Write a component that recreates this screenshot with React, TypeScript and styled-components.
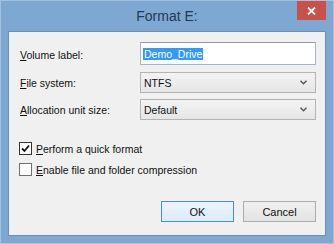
import React from "react";
import styled, { createGlobalStyle } from "styled-components";

const GlobalStyle = createGlobalStyle`
  html, body {
    margin: 0;
    padding: 0;
    background: #7fa8d1;
  }
  body {
    font-family: "Liberation Sans", Arial, sans-serif;
  }
`;

const Window = styled.div`
  box-sizing: border-box;
  width: 334px;
  height: 244px;
  display: flex;
  flex-direction: column;
  background: #7ea7d1;
  border: 1px solid #a4c1e0;
`;

const TitleBar = styled.div`
  height: 30px;
  display: grid;
  grid-template-columns: 1fr auto 1fr;
  align-items: start;
`;

const Title = styled.div`
  grid-column: 2;
  align-self: center;
  font-size: 14px;
  color: #233a55;
`;

const CloseButton = styled.div`
  grid-column: 3;
  justify-self: end;
  width: 29px;
  height: 19px;
  margin-right: 7px;
  background: #c9504b;
  display: flex;
  align-items: center;
  justify-content: center;
`;

const Content = styled.div`
  flex: 1;
  margin: 0 7px 7px 7px;
  background: #f0f0f0;
  border: 1px solid #6b90b8;
  display: flex;
  flex-direction: column;
  padding: 10px 9px 13px 11px;
  font-size: 10.5px;
  color: #111;
`;

const FormGrid = styled.div`
  display: grid;
  grid-template-columns: 120px 176px;
  grid-template-rows: 24px 21px 21px;
  row-gap: 6px;
  align-items: center;
`;

const Label = styled.div`
  padding-top: 1px;
`;

const U = styled.span`
  text-decoration: underline;
`;

const TextBox = styled.div`
  box-sizing: border-box;
  height: 23px;
  align-self: start;
  background: #fff;
  border: 1px solid #a9b6c8;
  border-top-color: #8a9bb4;
  display: flex;
  align-items: center;
  padding-left: 2px;
`;

const Selected = styled.span`
  background: #3399ff;
  color: #fff;
  padding: 0 1px;
  line-height: 12px;
`;

const Select = styled.div`
  box-sizing: border-box;
  height: 21px;
  border: 1px solid #b3b3b3;
  background: linear-gradient(#f3f3f3, #e6e6e6);
  display: flex;
  align-items: center;
  justify-content: space-between;
  padding: 0 8px 0 3px;
`;

const Checks = styled.div`
  margin-top: 18px;
  display: flex;
  flex-direction: column;
`;

const CheckRow = styled.div`
  height: 21px;
  display: flex;
  align-items: center;
  gap: 4px;
  margin-left: -1px;
`;

const Box = styled.div<{ $checked?: boolean }>`
  box-sizing: border-box;
  width: 13px;
  height: 13px;
  background: #fff;
  border: 1px solid ${(p) => (p.$checked ? "#333" : "#707070")};
  display: flex;
  align-items: center;
  justify-content: center;
`;

const Buttons = styled.div`
  margin-top: auto;
  display: flex;
  justify-content: flex-end;
  gap: 9px;
`;

const Button = styled.div<{ $default?: boolean }>`
  box-sizing: border-box;
  width: 73px;
  height: 21px;
  display: flex;
  align-items: center;
  justify-content: center;
  font-size: 11px;
  border: 1px solid ${(p) => (p.$default ? "#4a90c8" : "#acacac")};
  background: ${(p) =>
    p.$default ? "linear-gradient(#eaf4fc, #dcecfc)" : "linear-gradient(#f0f0f0, #e3e3e3)"};
`;

const Chevron = () => (
  <svg width="7" height="5" viewBox="0 0 7 5">
    <path d="M0.5 0.8 L3.5 3.8 L6.5 0.8" fill="none" stroke="#555" strokeWidth="1.4" />
  </svg>
);

export default function App() {
  return (
    <>
      <GlobalStyle />
      <Window>
        <TitleBar>
          <Title>Format E:</Title>
          <CloseButton>
            <svg width="9" height="8" viewBox="0 0 9 8">
              <path d="M1 0.5 L8 7.5 M8 0.5 L1 7.5" stroke="#fff" strokeWidth="1.8" />
            </svg>
          </CloseButton>
        </TitleBar>
        <Content>
          <FormGrid>
            <Label>
              <U>V</U>olume label:
            </Label>
            <TextBox>
              <Selected>Demo_Drive</Selected>
            </TextBox>
            <Label>
              <U>F</U>ile system:
            </Label>
            <Select>
              <span>NTFS</span>
              <Chevron />
            </Select>
            <Label>
              <U>A</U>llocation unit size:
            </Label>
            <Select>
              <span>Default</span>
              <Chevron />
            </Select>
          </FormGrid>
          <Checks>
            <CheckRow>
              <Box $checked>
                <svg width="9" height="9" viewBox="0 0 9 9">
                  <path d="M1 4.5 L3.5 7 L8 1.5" fill="none" stroke="#111" strokeWidth="1.8" />
                </svg>
              </Box>
              <span>
                <U>P</U>erform a quick format
              </span>
            </CheckRow>
            <CheckRow>
              <Box />
              <span>
                <U>E</U>nable file and folder compression
              </span>
            </CheckRow>
          </Checks>
          <Buttons>
            <Button $default>OK</Button>
            <Button>Cancel</Button>
          </Buttons>
        </Content>
      </Window>
    </>
  );
}
